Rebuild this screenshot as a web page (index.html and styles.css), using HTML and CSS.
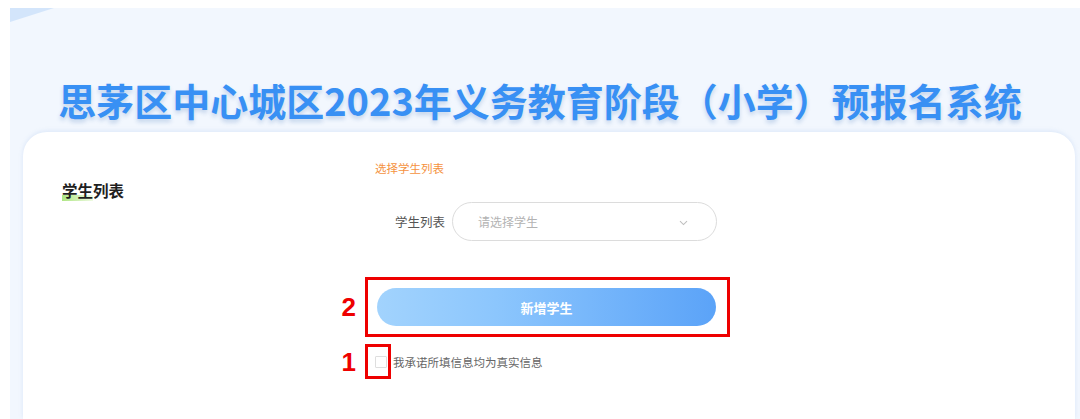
FILE: index.html
```html
<!DOCTYPE html>
<html lang="zh-CN">
<head>
<meta charset="utf-8">
<title>预报名系统</title>
<link rel="stylesheet" href="styles.css">
</head>
<body>
<div class="page">
  <div class="panel">
    <div class="corner"></div>
    <h1 class="title">思茅区中心城区2023年义务教育阶段（小学）预报名系统</h1>
    <div class="card">
      <div class="section-head"><span class="hl">学生</span>列表</div>
      <div class="form">
        <div class="hint">选择学生列表</div>
        <div class="row">
          <label class="label">学生列表</label>
          <div class="select">
            <span class="placeholder">请选择学生</span>
            <svg class="chev" width="9" height="6" viewBox="0 0 9 6"><path d="M1 1.2 L4.5 4.6 L8 1.2" fill="none" stroke="#bfbfbf" stroke-width="1.1"/></svg>
          </div>
        </div>
        <div class="mark mark-btn">
          <span class="num">2</span>
          <div class="btn">新增学生</div>
        </div>
        <div class="agree">
          <div class="mark mark-check">
            <span class="num">1</span>
            <span class="check"></span>
          </div>
          <span class="agree-text">我承诺所填信息均为真实信息</span>
        </div>
      </div>
    </div>
  </div>
</div>
</body>
</html>
```

FILE: styles.css
```css
html, body {
  margin: 0;
  padding: 0;
  background: #ffffff;
  font-family: "Noto Sans CJK SC", "Noto Sans", sans-serif;
}

.page {
  padding: 8px 0 0 10px;
  height: 411px;
  overflow: hidden;
}

.panel {
  position: relative;
  background: #f2f7fe;
  height: 100%;
  display: flex;
  flex-direction: column;
}

.corner {
  position: absolute;
  left: 0;
  top: 0;
  width: 44px;
  height: 14px;
  background: #d3e5fb;
  clip-path: polygon(0 0, 100% 0, 0 100%);
}

.title {
  margin: 0;
  padding-top: 67px;
  height: 57px;
  line-height: 50px;
  text-align: center;
  font-size: 38px;
  font-weight: 700;
  color: #3890f4;
  letter-spacing: 0;
  text-shadow: 0 3px 4px rgba(30, 90, 170, 0.22);
  padding-right: 10px;
}

.card {
  flex: 1;
  margin: 0 5px 0 13px;
  background: #ffffff;
  border-radius: 24px 24px 0 0;
  box-shadow: 0 -1px 4px rgba(150, 185, 230, 0.25);
  display: flex;
  align-items: flex-start;
  padding: 28px 0 0 39px;
}

.section-head {
  width: 303px;
  flex: none;
  margin-top: 20px;
  font-size: 15.5px;
  line-height: 20px;
  font-weight: 700;
  color: #1f1f1f;
}

.hl {
  background: linear-gradient(to right, rgba(160, 225, 110, 0.85), rgba(200, 240, 160, 0.3)) no-repeat;
  background-size: 100% 6px;
  background-position: 0 100%;
}

.form {
  display: flex;
  flex-direction: column;
  align-items: flex-start;
}

.hint {
  margin-left: 10px;
  font-size: 11.5px;
  line-height: 16px;
  color: #f5923e;
}

.row {
  margin-top: 26px;
  display: flex;
  align-items: center;
  padding-left: 10px;
}

.label {
  width: 70px;
  text-align: right;
  margin-right: 7px;
  font-size: 12.5px;
  color: #555;
}

.select {
  height: 37px;
  border: 1px solid #dcdcdc;
  border-radius: 20px;
  display: flex;
  align-items: center;
  justify-content: space-between;
  padding: 0 28px 0 25px;
  box-sizing: content-box;
  width: 210px;
}

.placeholder {
  font-size: 12px;
  color: #b3b3b3;
}

.chev {
  display: block;
  margin-top: 2px;
}

.mark {
  position: relative;
  border: 3px solid #ee0000;
}

.num {
  position: absolute;
  right: calc(100% + 12px);
  top: 50%;
  transform: translateY(-50%);
  font-family: "Liberation Sans", Arial, sans-serif;
  font-weight: 700;
  font-size: 26px;
  line-height: 26px;
  color: #ee0000;
}

.mark-btn {
  margin-top: 36px;
  padding: 8px 11px 8px 9px;
}

.btn {
  width: 339px;
  height: 38px;
  border-radius: 19px;
  background: linear-gradient(to right, #a2d3fd, #8cc6fd 35%, #5ba3f8);
  color: #ffffff;
  font-size: 13px;
  font-weight: 700;
  display: flex;
  align-items: center;
  justify-content: center;
}

.agree {
  margin-top: 7px;
  display: flex;
  align-items: center;
}

.mark-check {
  width: 20px;
  height: 29px;
  display: flex;
  align-items: center;
}

.mark-check .check {
  margin-left: 7px;
  width: 10px;
  height: 10px;
  border: 1px solid #dedede;
  border-radius: 1px;
  background: #fff;
}

.agree-text {
  margin-left: 2px;
  font-size: 11.5px;
  color: #666;
}
```
